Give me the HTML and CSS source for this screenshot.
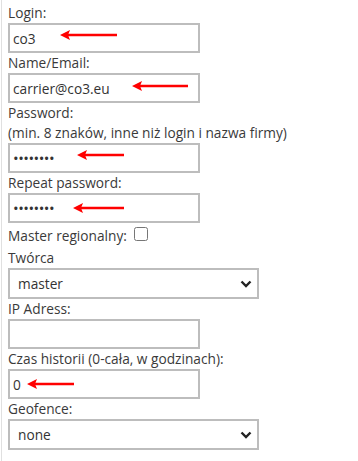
FILE: index.html
```html
<!DOCTYPE html>
<html lang="pl">
<head>
<meta charset="utf-8">
<link rel="stylesheet" href="styles.css">
</head>
<body>
<div class="form">
  <div class="label">Login:</div>
  <div class="field">
    <input class="text" type="text" value="co3">
    <svg class="arrow a-login" width="57" height="12" viewBox="0 0 57 12"><path d="M0 6 L10 1 L8 6 L10 11 Z" fill="#f00"/><line x1="8" y1="6" x2="57" y2="6" stroke="#f00" stroke-width="2.6"/></svg>
  </div>
  <div class="label">Name/Email:</div>
  <div class="field">
    <input class="text" type="text" value="carrier@co3.eu">
    <svg class="arrow a-name" width="56" height="12" viewBox="0 0 56 12"><path d="M0 6 L10 1 L8 6 L10 11 Z" fill="#f00"/><line x1="8" y1="6" x2="56" y2="6" stroke="#f00" stroke-width="2.6"/></svg>
  </div>
  <div class="label">Password:<br>(min. 8 znaków, inne niż login i nazwa firmy)</div>
  <div class="field">
    <input class="text pass" type="password" value="12345678">
    <svg class="arrow a-pass" width="47" height="12" viewBox="0 0 47 12"><path d="M0 6 L10 1 L8 6 L10 11 Z" fill="#f00"/><line x1="8" y1="6" x2="47" y2="6" stroke="#f00" stroke-width="2.6"/></svg>
  </div>
  <div class="label">Repeat password:</div>
  <div class="field">
    <input class="text pass" type="password" value="12345678">
    <svg class="arrow a-repeat" width="51" height="12" viewBox="0 0 51 12"><path d="M0 6 L10 1 L8 6 L10 11 Z" fill="#f00"/><line x1="8" y1="6" x2="51" y2="6" stroke="#f00" stroke-width="2.6"/></svg>
  </div>
  <div class="label check-row">Master regionalny:<input class="check" type="checkbox"></div>
  <div class="label">Twórca</div>
  <div class="field select-field">
    <select class="select"><option>master</option></select>
    <svg class="chevron" width="12" height="8" viewBox="0 0 12 8"><path d="M1.5 1.5 L6 6 L10.5 1.5" fill="none" stroke="#222" stroke-width="2.4"/></svg>
  </div>
  <div class="label">IP Adress:</div>
  <div class="field">
    <input class="text" type="text" value="">
  </div>
  <div class="label">Czas historii (0-cała, w godzinach):</div>
  <div class="field">
    <input class="text" type="text" value="0">
    <svg class="arrow a-czas" width="47" height="12" viewBox="0 0 47 12"><path d="M0 6 L10 1 L8 6 L10 11 Z" fill="#f00"/><line x1="8" y1="6" x2="47" y2="6" stroke="#f00" stroke-width="2.6"/></svg>
  </div>
  <div class="label">Geofence:</div>
  <div class="field select-field">
    <select class="select"><option>none</option></select>
    <svg class="chevron" width="12" height="8" viewBox="0 0 12 8"><path d="M1.5 1.5 L6 6 L10.5 1.5" fill="none" stroke="#222" stroke-width="2.4"/></svg>
  </div>
</div>
</body>
</html>
```
FILE: styles.css
```css
html, body {
  margin: 0;
  padding: 0;
  background: #fff;
}
body {
  font-family: "Open Sans", "Noto Sans", sans-serif;
  font-size: 13.7px;
  color: #3a3a3a;
}
.form {
  margin-left: 1px;
  border-left: 1px solid #e0e0e0;
  padding: 3px 0 0 6px;
  min-height: 100vh;
  box-sizing: border-box;
  display: flex;
  flex-direction: column;
  align-items: flex-start;
}
.label {
  line-height: 20px;
}
.check-row {
  display: flex;
  align-items: center;
  height: 24px;
  padding-top: 1px;
}
.check {
  width: 14px;
  height: 14px;
  margin: 0 0 4px 7px;
}
.field {
  position: relative;
}
.text {
  display: block;
  width: 192px;
  height: 30px;
  box-sizing: border-box;
  border: 2px solid #bdbdbd;
  padding: 0 3px;
  margin: 0;
  font-family: "Open Sans", "Noto Sans", sans-serif;
  font-size: 13.7px;
  color: #333;
  background: #fff;
  outline: none;
}
.pass {
  font-size: 15px;
  letter-spacing: -0.5px;
}
.select {
  display: block;
  width: 251px;
  height: 31px;
  box-sizing: border-box;
  border: 2px solid #bdbdbd;
  padding: 0 0 0 8px;
  margin: 0;
  font-family: "Open Sans", "Noto Sans", sans-serif;
  font-size: 13.7px;
  color: #333;
  background: #fff;
  appearance: none;
  -webkit-appearance: none;
  border-radius: 0;
}
.chevron {
  position: absolute;
  left: 232px;
  top: 12px;
}
.arrow {
  position: absolute;
}
.a-login { left: 52px; top: 6px; }
.a-name { left: 124px; top: 7px; }
.a-pass { left: 69px; top: 6px; }
.a-repeat { left: 65px; top: 9px; }
.a-czas { left: 19px; top: 9px; }
```
